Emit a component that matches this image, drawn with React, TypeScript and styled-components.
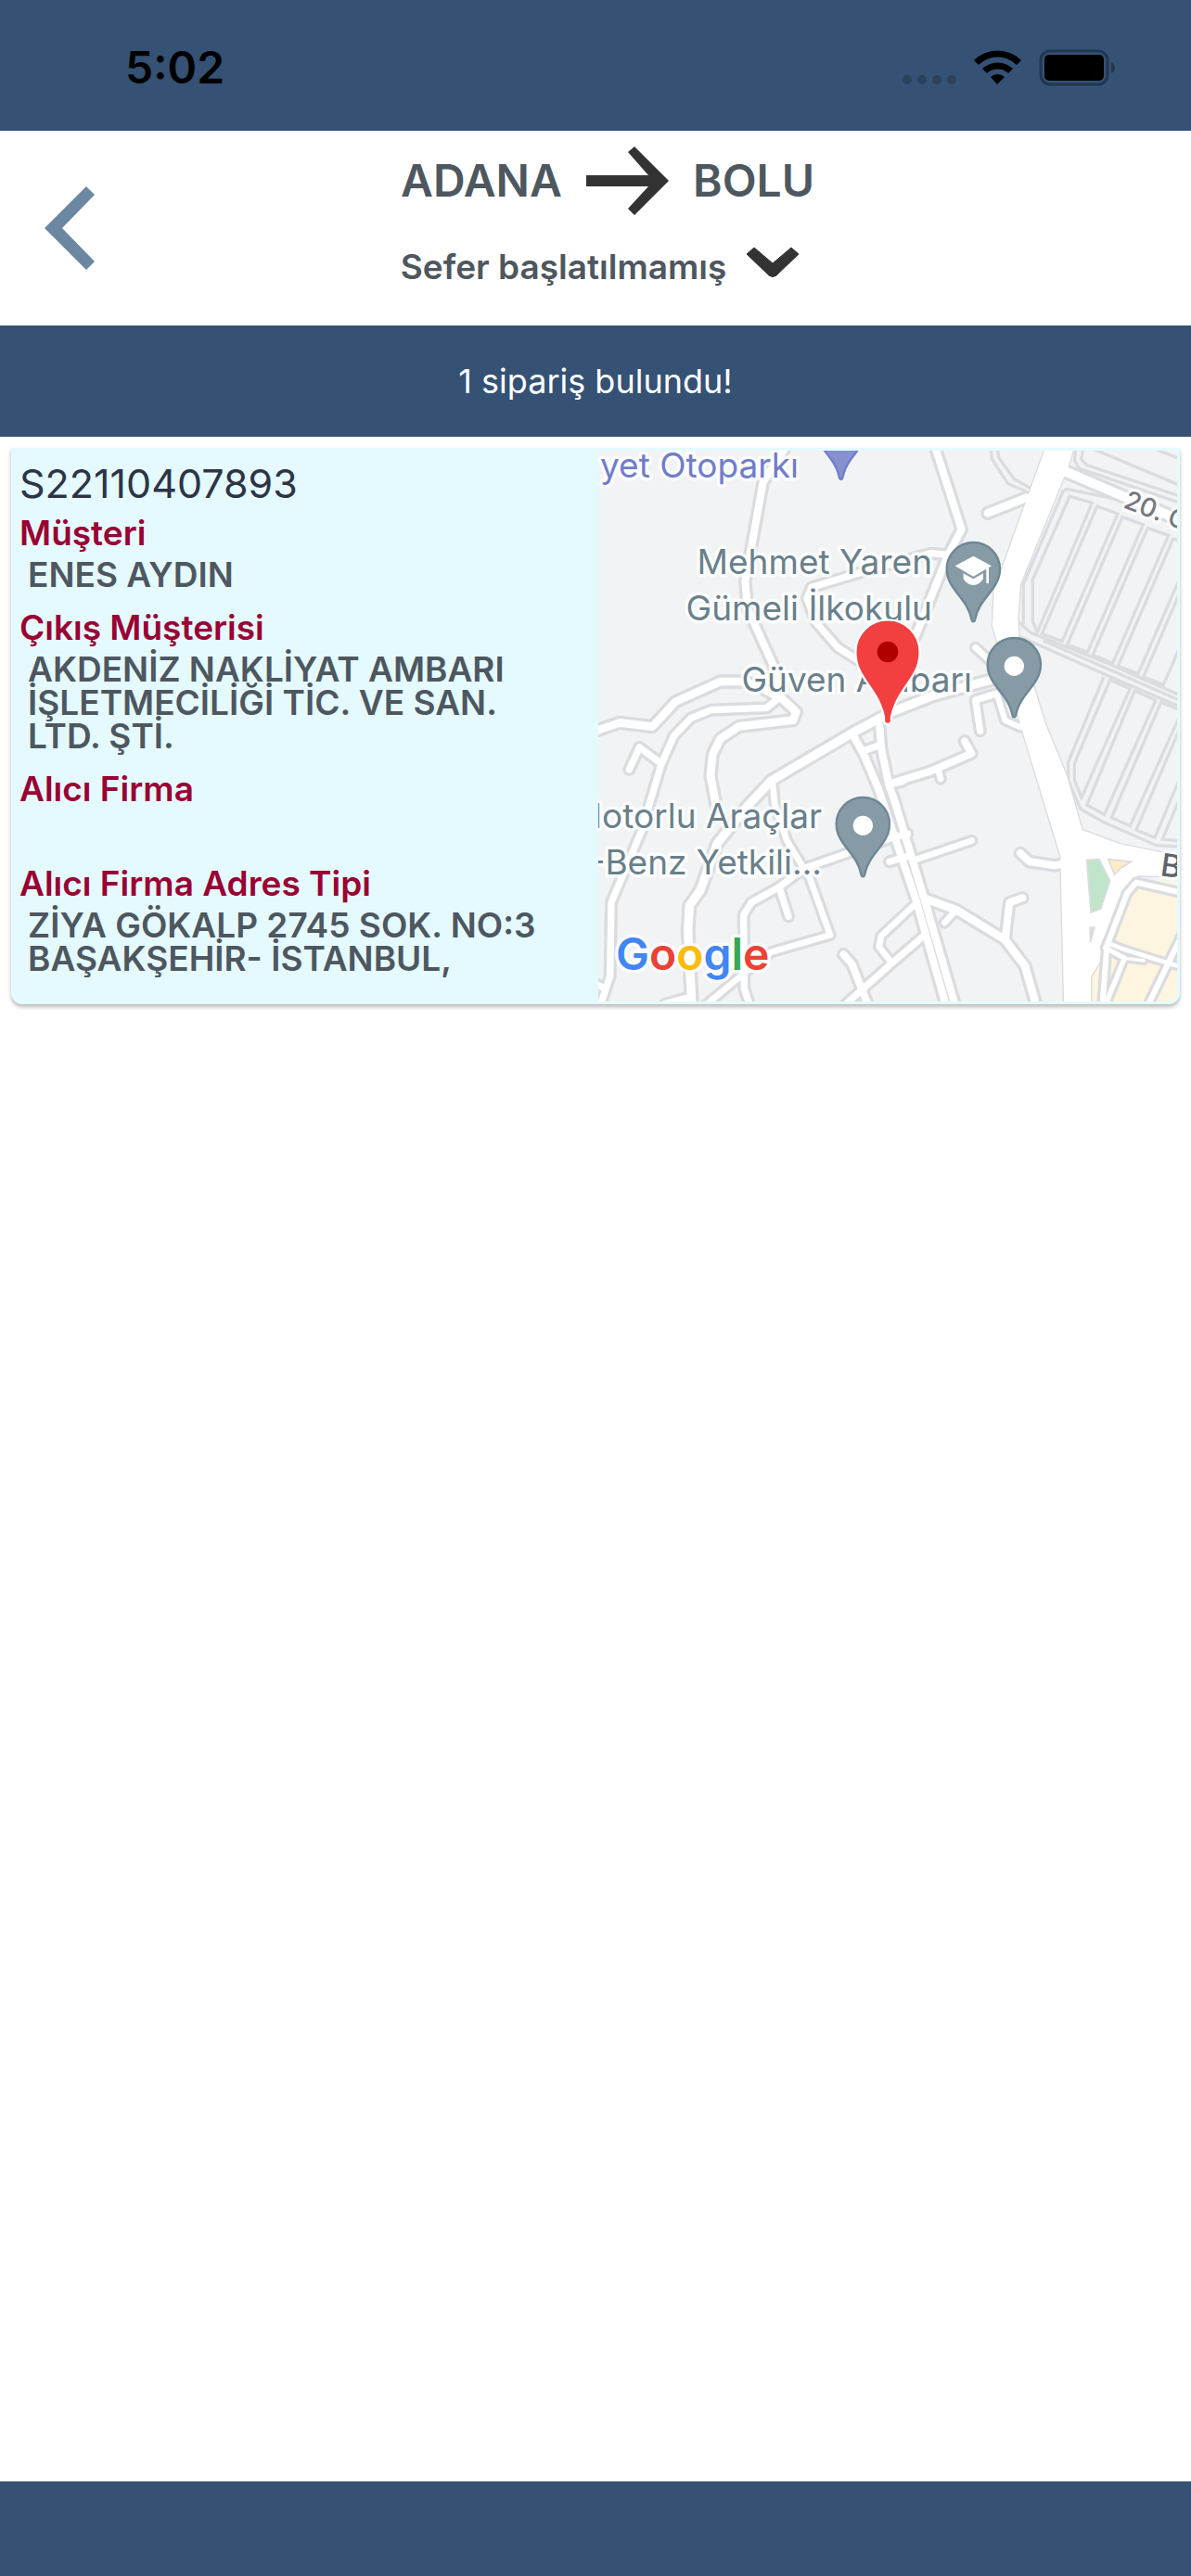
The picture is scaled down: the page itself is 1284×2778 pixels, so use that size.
import React from "react";
import styled, { createGlobalStyle } from "styled-components";

const navy = "#355174";
const slate = "#4e575f";
const crimson = "#990033";
const fontStack = `Inter, "Noto Sans", "Liberation Sans", sans-serif`;

const GlobalStyle = createGlobalStyle`
  *, *::before, *::after { box-sizing: border-box; }
  body { margin: 0; background: #fff; font-family: ${fontStack}; }
  button { font: inherit; color: inherit; background: none; border: 0; padding: 0; cursor: pointer; }
  svg { display: block; }
`;

const Screen = styled.div`
  display: flex;
  flex-direction: column;
  min-height: 100vh;
`;

const StatusBar = styled.div`
  display: flex;
  align-items: center;
  justify-content: space-between;
  height: 141px;
  padding: 5px 81px 0 135px;
  background: ${navy};
  color: #000;
`;

const Clock = styled.time`
  font-size: 48px;
  line-height: 60px;
  font-weight: 600;
`;

const Header = styled.header`
  display: grid;
  grid-template-columns: 130px 1fr 104px;
  background: #fff;
  color: ${slate};
`;

const BackButton = styled.button`
  display: flex;
  align-items: center;
  padding-left: 48px;
`;

const TripInfo = styled.div`
  display: flex;
  flex-direction: column;
  align-items: center;
  gap: 21px;
  padding: 17px 0 28px;
`;

const Route = styled.h1`
  display: flex;
  align-items: center;
  gap: 26px;
  margin: 0;
  font-size: 48px;
  line-height: 56px;
  font-weight: 600;
`;

const StatusButton = styled.button`
  display: flex;
  align-items: center;
  gap: 7px;
  font-size: 37px;
  line-height: 44px;
  font-weight: 600;
`;

const Banner = styled.p`
  margin: 0;
  padding: 38px 24px;
  background: ${navy};
  color: #fff;
  font-size: 36px;
  line-height: 44px;
  text-align: center;
`;

const OrderList = styled.main`
  flex: 1;
  padding: 12px;
`;

const OrderCard = styled.article`
  display: grid;
  grid-template-columns: minmax(0, 1fr) minmax(0, 1fr);
  gap: 6px;
  padding: 3px;
  border-radius: 0 0 12px 12px;
  background: #e4faff;
  box-shadow: 0 3px 4px rgba(0, 0, 0, 0.28);
`;

const OrderDetails = styled.div`
  padding: 8px 36px 16px 6px;
`;

const OrderNumber = styled.h2`
  margin: 0;
  color: #2d3446;
  font-size: 43px;
  line-height: 54px;
  font-weight: 400;
`;

const Fields = styled.dl`
  margin: 0;
`;

const FieldLabel = styled.dt`
  color: ${crimson};
  font-size: 37px;
  line-height: 54px;
  font-weight: 600;
`;

const FieldValue = styled.dd`
  min-height: 36px;
  margin: 0 0 12px 9px;
  color: ${slate};
  font-size: 37px;
  line-height: 36px;
  font-weight: 600;
`;

const MapFrame = styled.div`
  position: relative;
  overflow: hidden;
  border-radius: 0 0 9px 0;
  background: #f1f3f4;
`;

const MapSvg = styled.svg`
  position: absolute;
  inset: 0;
  width: 100%;
  height: 100%;
`;

const MapLabel = styled.text<{ $tone?: string; $size?: number; $weight?: number }>`
  font-family: ${fontStack};
  font-size: ${(p) => p.$size ?? 37}px;
  font-weight: ${(p) => p.$weight ?? 400};
  fill: ${(p) => p.$tone ?? "#69808b"};
  stroke: rgba(255, 255, 255, 0.75);
  stroke-width: 7px;
  stroke-linejoin: round;
  paint-order: stroke;
`;

const BottomBar = styled.footer`
  height: 102px;
  background: ${navy};
`;

const fields = [
  { label: "Müşteri", value: "ENES AYDIN" },
  { label: "Çıkış Müşterisi", value: "AKDENİZ NAKLİYAT AMBARI İŞLETMECİLİĞİ TİC. VE SAN. LTD. ŞTİ." },
  { label: "Alıcı Firma", value: "" },
  { label: "Alıcı Firma Adres Tipi", value: "ZİYA GÖKALP 2745 SOK. NO:3 BAŞAKŞEHİR- İSTANBUL," },
];

type Road = { points: string; width: number };

const road = (points: string, width = 22): Road => ({ points, width });

const roads: Road[] = [
  road("605,-10 533,102 497,302 475,422 483,512 565,692 588,797", 24),
  road("588,797 640,845 630,872 455,892 395,932 370,982 363,1052 382,1152", 26),
  road("588,797 545,832 365,839 300,865 245,922 203,1017 140,1230 42,1462 38,1700 5,1800"),
  road("588,800 515,760 465,747 395,747 250,812 175,893 70,880 -10,907", 26),
  road("203,1012 133,960 100,1032"),
  road("1135,337 1075,332 855,392 690,442 675,477 705,557 775,637 885,707 950,730"),
  road("1090,-10 1175,255 1130,340 1030,590 960,740", 24),
  road("1385,152 1260,202", 26),
  road("1510,67 1685,142 1890,228", 30),
  road("1285,737 1085,792 945,847 815,917 560,1067 485,1147 385,1270 330,1422 295,1472 290,1552 303,1800", 28),
  road("1220,637 1300,710", 20),
  road("1285,787 1220,807 1235,907", 22),
  road("1290,790 1315,872 1365,895", 18),
  road("910,892 915,962 940,1082 955,1122 1055,1452 1156,1800", 24),
  road("825,922 860,985 905,1092 1027,1452 1126,1800", 24),
  road("855,972 905,955", 22),
  road("945,1077 1075,1037 1207,980 1185,940", 24),
  road("1100,1035 1107,1062", 20),
  road("940,1080 985,1070", 22),
  road("1030,1322 1208,1262", 20),
  road("1060,1450 1160,1487 1315,1582 1380,1667 1418,1800", 26),
  road("1152,1492 1120,1527", 20),
  road("1317,1572 1330,1462 1372,1447", 24),
  road("1365,1302 1395,1330 1475,1342 1540,1330", 24),
  road("1000,1240 950,1252 665,1352 585,1412 495,1462 470,1502 472,1740 492,1800"),
  road("585,1412 615,1507"),
  road("680,1372 750,1567 560,1622 470,1692 340,1800", 20),
  road("565,1082 570,1140 610,1262 665,1352", 20),
  road("942,1330 1010,1310", 22),
  road("1025,1467 915,1570 908,1605 945,1652", 20),
  road("1050,1572 945,1662 855,1742 790,1800", 22),
  road("793,1630 820,1660 875,1800", 24),
  road("215,1790 300,1767"),
  road("-10,1725 22,1740"),
];

const districtRoads: Road[] = [
  road("1890,1431 1740,1397 1710,1432 1645,1602 1630,1800", 18),
  road("1645,1782 1702,1642 1640,1608", 16),
  road("1645,1592 1705,1615 1800,1645 1890,1672", 14),
  road("1702,1642 1765,1650", 10),
  road("1895,1552 1775,1800", 18),
];

const highway =
  "M1450-20 1280 452 1275 567 1300 652 1370 902 1495 1312 1507 1800H1593V1702L1625 1650 1645 1552 1710 1407 1745 1375 1890 1378V1314L1685 1272 1565 1227 1515 1052 1445 882 1360 602 1357 542 1365 432 1518 57 1542-20Z";

const parkingLots = [
  "M1525 147 1597 169 1420 587 1405 552V417Z",
  ...[0, 1, 2, 3, 4].map((i) => {
    const x = 1613 + 82 * i;
    const y = 180 + 35 * i;
    return `M${x} ${y}l67 24-180 413-65-25Z`;
  }),
  "M1655 742 1720 770 1563 1122 1540 1067V1012Z",
  "M1735 777 1803 807 1637 1177 1580 1147Z",
  "M1820 814 1888 842 1720 1214 1660 1187Z",
  "M1902 850 1960 870 1800 1252 1740 1227Z",
  "M1975 900 1990 1260 1870 1262 1825 1257Z",
  "M1505 127 1375 432V562",
  "M1360 555 1400 590 1645 687 1890 795",
  "M1360 600 1645 727 1890 832",
  "M1440 615 1890 812",
  "M1505 127 1520 125 1690 160 1890 250",
  "M1635 732 1520 1007V1067L1560 1160 1635 1202 1805 1277 1890 1282",
  "M1270-10 1273 27 1325 107 1385 132",
  "M1290-10 1295 22 1345 92 1400 122",
  "M1545-10 1540 32 1555 57 1890 172",
  "M1570-10 1562 27 1580 47 1890 150",
  "M1590-10 1890 116",
  "M1790-10 1890 30",
];

const PlacePin = ({ x, y, fill = "#879ba6", edge = "#6d8893", children }: {
  x: number;
  y: number;
  fill?: string;
  edge?: string;
  children?: React.ReactNode;
}) => (
  <g transform={`translate(${x} ${y})`}>
    <path
      d="M0-86A86 86 0 0 1 86 0C86 65 18 95 6 162Q4 170 0 170Q-4 170-6 162C-18 95-86 65-86 0A86 86 0 0 1 0-86Z"
      fill={fill}
      stroke={edge}
      strokeWidth="7"
    />
    {children}
  </g>
);

const RoadGroup = ({ items }: { items: Road[] }) => (
  <g fill="none" strokeLinecap="round" strokeLinejoin="round">
    {items.map((r) => (
      <polyline key={`edge-${r.points}`} points={r.points} stroke="#dadce0" strokeWidth={r.width + 20} />
    ))}
    {items.map((r) => (
      <polyline key={`fill-${r.points}`} points={r.points} stroke="#fff" strokeWidth={r.width} />
    ))}
  </g>
);

const OrderMap = () => (
  <MapSvg viewBox="0 0 624 594" preserveAspectRatio="xMidYMid slice" role="img" aria-label="Google">
    <g transform="scale(0.33333)">
      <path d={parkingLots.join("")} fill="none" stroke="#dadce0" strokeWidth="10" />
      <path d="M1725 1385 1890 1395V1800H1596V1710L1640 1600 1700 1425Z" fill="#fdf5df" />
      <path d={highway} fill="#fff" stroke="#dadce0" strokeWidth="8" />
      <RoadGroup items={roads} />
      <path d={highway} fill="#fff" />
      <RoadGroup items={districtRoads} />
      <path d="M1510 67 1560 88" stroke="#fff" strokeWidth="30" />
      <g stroke="#dadce0" strokeWidth="5">
        <path d="M1580 1324 1620 1322 1655 1392 1625 1482 1593 1494Z" fill="#c0e5cb" />
        <path d="M1650 1322 1724 1330 1690 1350 1670 1372Z" fill="#fdecc4" />
        <path d="M1590 1544 1605 1542 1592 1590Z" fill="#dadce0" />
      </g>
      <PlacePin x={785} y={-77} fill="#8791cf" edge="#717ccb" />
      <PlacePin x={1213} y={383}>
        <path d="M0-42 59-10 0 24-59-10ZM-32 14 0 32 32 14V32Q20 52 0 52Q-20 52-32 32ZM42-6H50V46H42Z" fill="#fff" />
      </PlacePin>
      <PlacePin x={1345} y={692}>
        <circle cy="5" r="32" fill="#fff" />
      </PlacePin>
      <PlacePin x={856} y={1208}>
        <circle cy="5" r="32" fill="#fff" />
      </PlacePin>
    </g>

    <MapLabel x="216" y="29" textAnchor="end" $tone="#717ccb">yet Otoparkı</MapLabel>
    <MapLabel x="360" y="133" textAnchor="end">Mehmet Yaren</MapLabel>
    <MapLabel x="360" y="183" textAnchor="end">Gümeli İlkokulu</MapLabel>
    <MapLabel x="403" y="260" textAnchor="end">Güven Ambarı</MapLabel>
    <MapLabel x="241" y="407" textAnchor="end">Motorlu Araçlar</MapLabel>
    <MapLabel x="241" y="457" textAnchor="end">-Benz Yetkili...</MapLabel>
    <MapLabel transform="translate(565 61) rotate(21)" $tone="#76787f" $size={28} $weight={500}>20. C</MapLabel>
    <MapLabel transform="translate(605 458) rotate(8)" $tone="#5f6368" $size={34} $weight={500}>B</MapLabel>

    <g transform="translate(312 217) scale(0.33333)">
      <path
        d="M0-104A104 104 0 0 1 104 0C104 88 34 110 12 210V226Q10 234 0 234Q-10 234-12 226V210C-34 110-104 88-104 0A104 104 0 0 1 0-104Z"
        fill="#f33f40"
        stroke="#fff"
        strokeWidth="7"
      />
      <circle r="34" fill="#b00000" />
    </g>

    <MapLabel x="19" y="560" $size={48} $weight={600}>
      <tspan fill="#4285f4">G</tspan>
      <tspan fill="#ea4335">o</tspan>
      <tspan fill="#fbbc05">o</tspan>
      <tspan fill="#4285f4">g</tspan>
      <tspan fill="#34a853">l</tspan>
      <tspan fill="#ea4335">e</tspan>
    </MapLabel>
  </MapSvg>
);

const StatusIcons = () => (
  <svg width="230" height="40" viewBox="0 0 230 40" aria-hidden="true">
    <g fill="#2b425f">
      <circle cx="5" cy="33" r="5" />
      <circle cx="21" cy="33" r="5" />
      <circle cx="37" cy="33" r="5" />
      <circle cx="53" cy="33" r="5" />
    </g>
    <path d="M77 12A36 36 0 0 1 128 12L123 17A29 29 0 0 0 82 17ZM86 21A24 24 0 0 1 119 21L114 26A17 17 0 0 0 91 26ZM95 30A11 11 0 0 1 110 30L102 38Z" />
    <rect x="149" y="2" width="72" height="36" rx="10" fill="none" stroke="#223750" strokeWidth="3" />
    <rect x="153" y="6" width="64" height="28" rx="5" />
    <path d="M225 14Q229 16 229 20Q229 24 225 26Z" fill="#223750" />
  </svg>
);

const BackIcon = () => (
  <svg width="54" height="90" viewBox="0 0 54 90" aria-hidden="true">
    <path d="M45 0 54 9 19 45 54 81 45 90 0 45Z" fill="#6b87a1" />
  </svg>
);

const ArrowIcon = () => (
  <svg width="89" height="74" viewBox="0 0 89 74" aria-hidden="true">
    <path d="M0 31H67L45 6 52 0 89 37 52 74 45 67 67 43H0Z" fill="#333" />
  </svg>
);

const ChevronDownIcon = () => (
  <svg width="88" height="70" viewBox="0 0 88 70" aria-hidden="true">
    <path d="M15 21 23 14 43 31 63 14 71 21 47 44Q43 47 39 44Z" fill="#333" stroke="#333" strokeLinejoin="round" />
  </svg>
);

export default function App() {
  return (
    <>
      <GlobalStyle />
      <Screen>
        <StatusBar>
          <Clock>5:02</Clock>
          <StatusIcons />
        </StatusBar>
        <Header>
          <BackButton type="button" aria-label="Geri">
            <BackIcon />
          </BackButton>
          <TripInfo>
            <Route>
              <span>ADANA</span>
              <ArrowIcon />
              <span>BOLU</span>
            </Route>
            <StatusButton type="button">
              <span>Sefer başlatılmamış</span>
              <ChevronDownIcon />
            </StatusButton>
          </TripInfo>
        </Header>
        <Banner>1 sipariş bulundu!</Banner>
        <OrderList>
          <OrderCard>
            <OrderDetails>
              <OrderNumber>S22110407893</OrderNumber>
              <Fields>
                {fields.map((field) => (
                  <React.Fragment key={field.label}>
                    <FieldLabel>{field.label}</FieldLabel>
                    <FieldValue>{field.value}</FieldValue>
                  </React.Fragment>
                ))}
              </Fields>
            </OrderDetails>
            <MapFrame>
              <OrderMap />
            </MapFrame>
          </OrderCard>
        </OrderList>
        <BottomBar />
      </Screen>
    </>
  );
}
